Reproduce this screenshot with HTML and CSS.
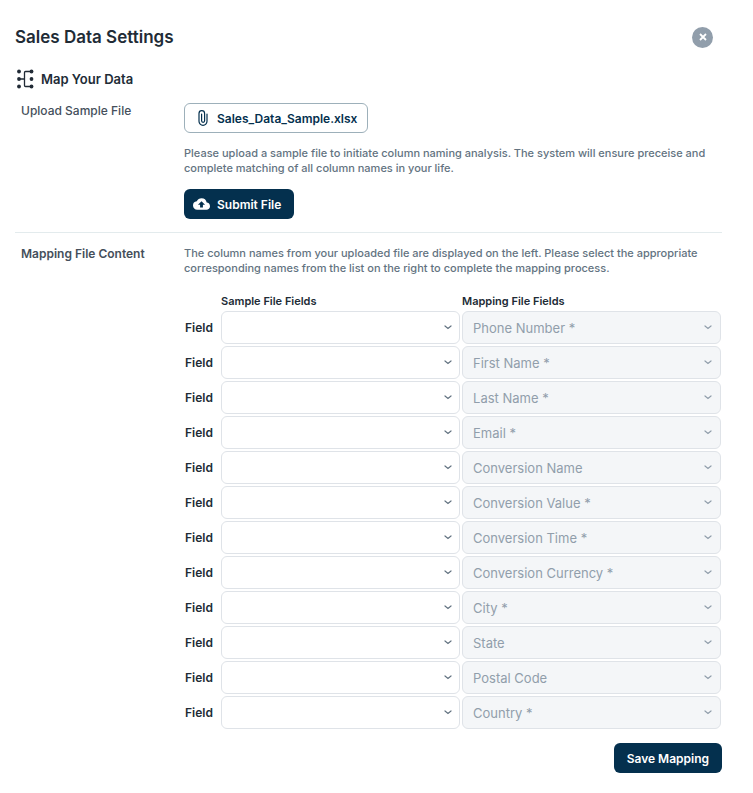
FILE: index.html
```html
<!DOCTYPE html>
<html lang="en">
<head>
  <meta charset="UTF-8">
  <meta name="viewport" content="width=device-width, initial-scale=1.0">
  <title>Sales Data Settings</title>
  <link rel="stylesheet" href="styles.css">
</head>
<body>
  <main class="settings">
    <header class="settings-header">
      <h1>Sales Data Settings</h1>
      <button class="close-btn" type="button" aria-label="Close">
        <svg width="8" height="8" viewBox="0 0 8 8" fill="none" stroke="currentColor" stroke-width="1.800">
          <path d="M1 1l6 6M7 1L1 7"/>
        </svg>
      </button>
    </header>

    <h2 class="section-title">
      <svg width="18" height="20" viewBox="0 0 18 20" fill="currentColor">
        <path d="M3 10h5.500M15 2.500H9.500q-1 0-1 1v13q0 1 1 1H15" fill="none" stroke="currentColor" stroke-width="1.300"/>
        <circle cx="3" cy="2.500" r="1.900"/>
        <circle cx="3" cy="10" r="1.900"/>
        <circle cx="3" cy="17.500" r="1.900"/>
        <circle cx="15.500" cy="2.500" r="1.900"/>
        <circle cx="15.500" cy="10" r="1.900"/>
        <circle cx="15.500" cy="17.500" r="1.900"/>
      </svg>
      Map Your Data
    </h2>

    <section class="row upload">
      <h3 class="row-label">Upload Sample File</h3>
      <div class="row-content">
        <button class="btn btn-outline" type="button">
          <svg width="16" height="16" viewBox="0 0 16 16" fill="none" stroke="currentColor" stroke-width="1.200" stroke-linecap="round">
            <path d="M12 4v7.300a4 4 0 0 1-8 0V3.500a2.800 2.800 0 0 1 5.600 0v7.300a1.500 1.500 0 0 1-3 0V4"/>
          </svg>
          Sales_Data_Sample.xlsx
        </button>
        <p class="hint">Please upload a sample file to initiate column naming analysis. The system will ensure preceise and complete matching of all column names in your life.</p>
        <button class="btn btn-primary" type="submit">
          <svg width="17" height="12" viewBox="0 4 24 16" fill="currentColor">
            <path d="M19.350 10.040A7.490 7.490 0 0 0 12 4C9.110 4 6.600 5.640 5.350 8.040A5.994 5.994 0 0 0 0 14c0 3.310 2.690 6 6 6h13c2.760 0 5-2.240 5-5 0-2.640-2.050-4.780-4.650-4.960zM14 13v4h-4v-4H7l5-5 5 5h-3z"/>
          </svg>
          Submit File
        </button>
      </div>
    </section>

    <section class="row mapping">
      <h3 class="row-label">Mapping File Content</h3>
      <div class="row-content">
        <p class="hint">The column names from your uploaded file are displayed on the left. Please select the appropriate corresponding names from the list on the right to complete the mapping process.</p>
        <div class="fields" id="fields">
          <span></span>
          <span class="fields-head">Sample File Fields</span>
          <span class="fields-head">Mapping File Fields</span>
        </div>
      </div>
    </section>

    <footer class="settings-footer">
      <button class="btn btn-primary" type="submit">Save Mapping</button>
    </footer>
  </main>

  <script>
    const mappingFields = [
      "Phone Number *", "First Name *", "Last Name *", "Email *",
      "Conversion Name", "Conversion Value *", "Conversion Time *", "Conversion Currency *",
      "City *", "State", "Postal Code", "Country *"
    ];

    document.getElementById("fields").insertAdjacentHTML("beforeend",
      mappingFields.map((name, i) => `
        <label for="sample-${i}">Field</label>
        <select id="sample-${i}"><option></option></select>
        <select aria-label="Mapping field ${i + 1}" disabled><option>${name}</option></select>
      `).join(""));
  </script>
</body>
</html>
```
FILE: styles.css
```css
* {
  box-sizing: border-box;
}
body {
  margin: 0;
  font-family: Inter, sans-serif;
  background-color: #fff;
  color: #212b36;
}
h1, h2, h3, p {
  margin: 0;
}
button, select {
  font-family: inherit;
}
.settings {
  padding: 24px 31px 20px 15px;
}
.settings-header {
  display: flex;
  justify-content: space-between;
  align-items: center;
  padding-right: 9px;
}
.settings-header h1 {
  font-size: 17px;
  line-height: 26px;
  font-weight: 600;
}
.close-btn {
  display: flex;
  align-items: center;
  justify-content: center;
  width: 21px;
  height: 21px;
  padding: 0;
  border: none;
  border-radius: 50%;
  background-color: #919eab;
  color: #fff;
  cursor: pointer;
}
.section-title {
  display: flex;
  align-items: center;
  gap: 7px;
  margin-top: 19px;
  padding-left: 1px;
  font-size: 13px;
  line-height: 20px;
  font-weight: 600;
}
.row {
  display: grid;
  grid-template-columns: 163px minmax(0, 1fr);
  padding-left: 6px;
}
.upload {
  padding-top: 14px;
  padding-bottom: 13px;
  border-bottom: 1px solid #e3ebed;
}
.mapping {
  padding-top: 13px;
}
.row-label {
  font-size: 12px;
  line-height: 16px;
  font-weight: 500;
  color: #454f5b;
}
.mapping .row-label {
  font-weight: 600;
}
.hint {
  font-size: 11px;
  line-height: 15px;
  font-weight: 500;
  color: #637381;
}
.btn {
  display: flex;
  align-items: center;
  gap: 7px;
  height: 30px;
  border-radius: 6px;
  font-size: 12px;
  font-weight: 600;
  cursor: pointer;
}
.btn-outline {
  gap: 6px;
  padding: 0 10px;
  border: 1px solid #9db0ba;
  background-color: #fff;
  color: #04304e;
}
.btn-primary {
  padding: 0 13px 0 9px;
  border: none;
  background-color: #04304e;
  color: #fff;
}
.upload .hint {
  margin: 13px 0;
}
.fields {
  display: grid;
  grid-template-columns: 35px minmax(0, 12fr) minmax(0, 13fr);
  gap: 2px;
  align-items: center;
  margin-top: 17px;
  padding-right: 1px;
}
.fields-head {
  font-size: 11px;
  line-height: 16px;
  font-weight: 600;
}
.fields label {
  padding-left: 1px;
  font-size: 12px;
  font-weight: 600;
}
.fields select {
  appearance: none;
  width: 100%;
  height: 33px;
  padding: 0 24px 0 10px;
  border: 1px solid #dfe3e8;
  border-radius: 6px;
  background: #fff url("data:image/svg+xml,%3Csvg xmlns='http://www.w3.org/2000/svg' width='8' height='5' fill='none' stroke='%23637381' stroke-width='1.2' stroke-linecap='round'%3E%3Cpath d='M1 1l3 2.500 3-2.500'/%3E%3C/svg%3E") no-repeat right 7px center;
  font-size: 13px;
  color: #212b36;
}
.fields select:disabled {
  background-color: #f4f6f8;
  background-image: url("data:image/svg+xml,%3Csvg xmlns='http://www.w3.org/2000/svg' width='8' height='5' fill='none' stroke='%23919eab' stroke-width='1.2' stroke-linecap='round'%3E%3Cpath d='M1 1l3 2.500 3-2.500'/%3E%3C/svg%3E");
  background-position: right 8px center;
  color: #919eab;
  opacity: 1;
}
.settings-footer {
  display: flex;
  justify-content: flex-end;
  margin-top: 14px;
}
.settings-footer .btn {
  padding: 0 13px;
}
```
